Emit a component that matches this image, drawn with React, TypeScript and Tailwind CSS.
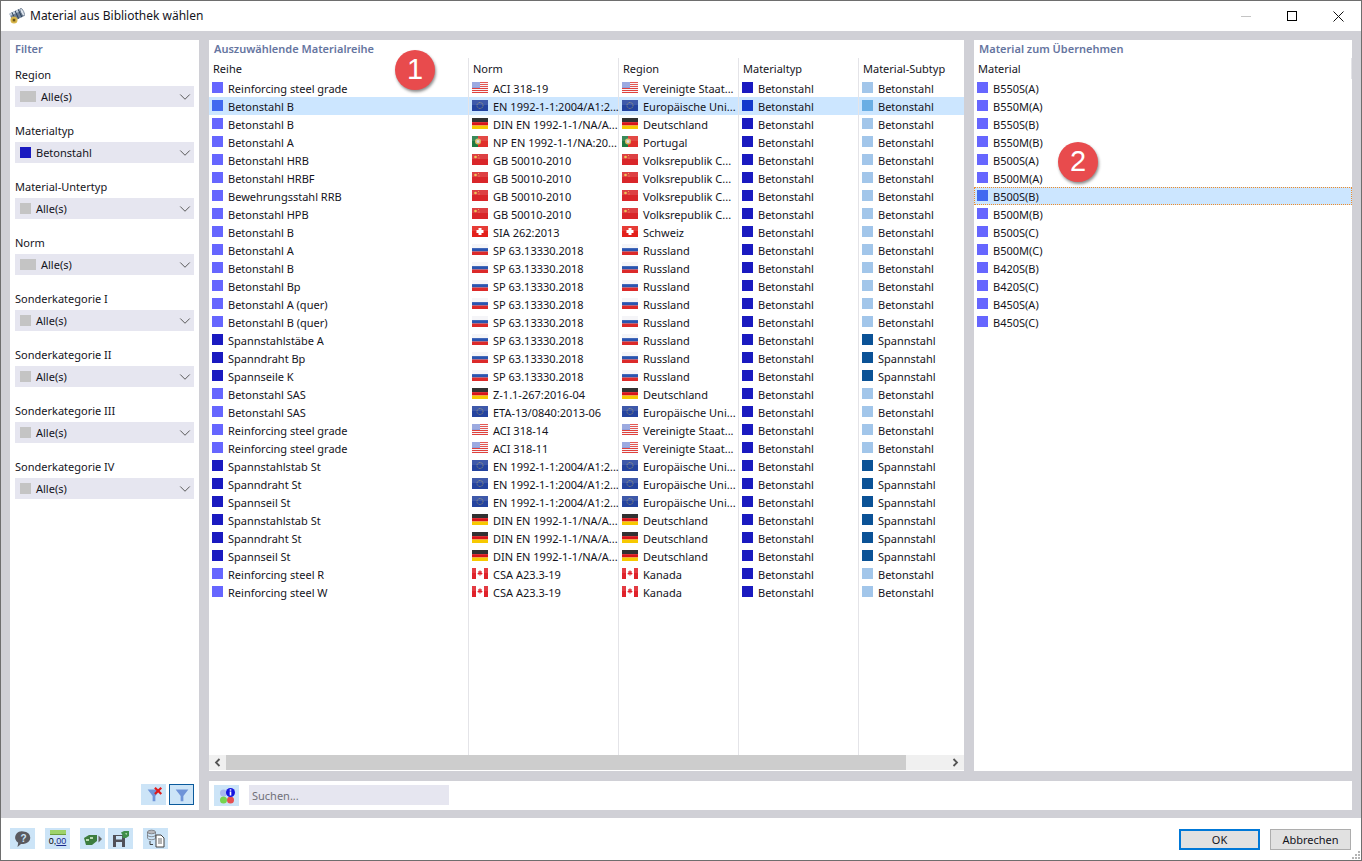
import { ChevronDown } from "lucide-react";

type FlagCode = "us" | "eu" | "de" | "pt" | "cn" | "ch" | "ru" | "ca";

interface Row {
  name: string;
  prestress?: boolean;
  norm: string;
  flag: FlagCode;
  region: string;
}

const US = "Vereinigte Staat...";
const EU = "Europäische Uni...";
const DE = "Deutschland";
const CN = "Volksrepublik C...";
const RU = "Russland";
const EC2 = "EN 1992-1-1:2004/A1:2...";
const DIN = "DIN EN 1992-1-1/NA/A...";
const SP = "SP 63.13330.2018";

const rows: Row[] = [
  { name: "Reinforcing steel grade", norm: "ACI 318-19", flag: "us", region: US },
  { name: "Betonstahl B", norm: EC2, flag: "eu", region: EU },
  { name: "Betonstahl B", norm: DIN, flag: "de", region: DE },
  { name: "Betonstahl A", norm: "NP EN 1992-1-1/NA:20...", flag: "pt", region: "Portugal" },
  { name: "Betonstahl HRB", norm: "GB 50010-2010", flag: "cn", region: CN },
  { name: "Betonstahl HRBF", norm: "GB 50010-2010", flag: "cn", region: CN },
  { name: "Bewehrungsstahl RRB", norm: "GB 50010-2010", flag: "cn", region: CN },
  { name: "Betonstahl HPB", norm: "GB 50010-2010", flag: "cn", region: CN },
  { name: "Betonstahl B", norm: "SIA 262:2013", flag: "ch", region: "Schweiz" },
  { name: "Betonstahl A", norm: SP, flag: "ru", region: RU },
  { name: "Betonstahl B", norm: SP, flag: "ru", region: RU },
  { name: "Betonstahl Bp", norm: SP, flag: "ru", region: RU },
  { name: "Betonstahl A (quer)", norm: SP, flag: "ru", region: RU },
  { name: "Betonstahl B (quer)", norm: SP, flag: "ru", region: RU },
  { name: "Spannstahlstäbe A", prestress: true, norm: SP, flag: "ru", region: RU },
  { name: "Spanndraht Bp", prestress: true, norm: SP, flag: "ru", region: RU },
  { name: "Spannseile K", prestress: true, norm: SP, flag: "ru", region: RU },
  { name: "Betonstahl SAS", norm: "Z-1.1-267:2016-04", flag: "de", region: DE },
  { name: "Betonstahl SAS", norm: "ETA-13/0840:2013-06", flag: "eu", region: EU },
  { name: "Reinforcing steel grade", norm: "ACI 318-14", flag: "us", region: US },
  { name: "Reinforcing steel grade", norm: "ACI 318-11", flag: "us", region: US },
  { name: "Spannstahlstab St", prestress: true, norm: EC2, flag: "eu", region: EU },
  { name: "Spanndraht St", prestress: true, norm: EC2, flag: "eu", region: EU },
  { name: "Spannseil St", prestress: true, norm: EC2, flag: "eu", region: EU },
  { name: "Spannstahlstab St", prestress: true, norm: DIN, flag: "de", region: DE },
  { name: "Spanndraht St", prestress: true, norm: DIN, flag: "de", region: DE },
  { name: "Spannseil St", prestress: true, norm: DIN, flag: "de", region: DE },
  { name: "Reinforcing steel R", norm: "CSA A23.3-19", flag: "ca", region: "Kanada" },
  { name: "Reinforcing steel W", norm: "CSA A23.3-19", flag: "ca", region: "Kanada" },
];

const materials = [
  "B550S(A)", "B550M(A)", "B550S(B)", "B550M(B)", "B500S(A)", "B500M(A)", "B500S(B)",
  "B500M(B)", "B500S(C)", "B500M(C)", "B420S(B)", "B420S(C)", "B450S(A)", "B450S(C)",
];

const filters = [
  { label: "Region", value: "Alle(s)", wide: true },
  { label: "Materialtyp", value: "Betonstahl", color: "bg-[#1a1ac0]" },
  { label: "Material-Untertyp", value: "Alle(s)" },
  { label: "Norm", value: "Alle(s)", wide: true },
  { label: "Sonderkategorie I", value: "Alle(s)" },
  { label: "Sonderkategorie II", value: "Alle(s)" },
  { label: "Sonderkategorie III", value: "Alle(s)" },
  { label: "Sonderkategorie IV", value: "Alle(s)" },
];

function Flag({ code }: { code: FlagCode }) {
  return (
    <svg width="16" height="11" viewBox="0 0 16 11" className="mt-[3px] shrink-0">
      {code === "us" && (
        <>
          <rect width="16" height="11" fill="#f4f4f8" />
          {[0, 2, 4, 6, 8, 10].map((y) => (
            <rect key={y} y={y} width="16" height="1" fill="#e0413c" />
          ))}
          <rect width="8" height="6" fill="#8f9fdc" />
        </>
      )}
      {code === "eu" && (
        <>
          <rect width="16" height="11" fill="#24439f" />
          <circle cx="8" cy="5.5" r="3" fill="none" stroke="#a79f68" strokeWidth="0.8" strokeDasharray="0.9 0.7" />
        </>
      )}
      {code === "de" && (
        <>
          <rect width="16" height="4" fill="#151515" />
          <rect y="4" width="16" height="3.5" fill="#d8141a" />
          <rect y="7.5" width="16" height="3.5" fill="#f7c900" />
        </>
      )}
      {code === "pt" && (
        <>
          <rect width="16" height="11" fill="#e0302c" />
          <rect width="6" height="11" fill="#1f7a42" />
          <circle cx="6" cy="5.5" r="3" fill="#d9b75e" />
          <circle cx="6" cy="5.5" r="1.5" fill="#d9d9e6" />
        </>
      )}
      {code === "cn" && (
        <>
          <rect width="16" height="11" fill="#d9262a" />
          <circle cx="3.5" cy="3" r="1.3" fill="#eec040" />
          <circle cx="6.5" cy="1.5" r="0.5" fill="#eec040" />
          <circle cx="7" cy="4" r="0.5" fill="#eec040" />
        </>
      )}
      {code === "ch" && (
        <>
          <rect width="16" height="11" fill="#e3211c" />
          <rect x="6.5" y="2" width="3" height="7" fill="#fff" />
          <rect x="4.5" y="4" width="7" height="3" fill="#fff" />
        </>
      )}
      {code === "ru" && (
        <>
          <rect width="16" height="4" fill="#f4f4f8" />
          <rect y="4" width="16" height="3.5" fill="#2a55b0" />
          <rect y="7.5" width="16" height="3.5" fill="#dc2a2a" />
        </>
      )}
      {code === "ca" && (
        <>
          <rect width="16" height="11" fill="#fff" />
          <rect width="4" height="11" fill="#e0222a" />
          <rect x="12" width="4" height="11" fill="#e0222a" />
          <path d="M8 2l1 1.5 1-.4-.4 2 1-.2-.6 1.600H8.300V8h-.6V6.500H5.900L5.400 4.900l1 .2-.4-2 1 .4z" fill="#e0222a" />
        </>
      )}
      {/* the flags carry a soft highlight over their upper half */}
      <rect width="16" height="5" fill="#fff" opacity="0.12" />
    </svg>
  );
}

function Swatch({ color, className = "mt-[3px]" }: { color: string; className?: string }) {
  return <span className={`h-[11px] w-[11px] shrink-0 ${className} ${color}`} />;
}

function Column({
  title,
  width,
  last,
  children,
}: {
  title: string;
  width: string;
  last?: boolean;
  children: React.ReactNode;
}) {
  return (
    <div className={`flex h-full shrink-0 flex-col ${width} ${last ? "" : "border-r border-[#e4e4e8]"}`}>
      <div className="h-[21px] pl-[4px] pt-[3px] leading-[16px]">{title}</div>
      {children}
    </div>
  );
}

function Cell({ selected, children }: { selected: boolean; children: React.ReactNode }) {
  return (
    <div className={`flex h-[18px] gap-[5px] whitespace-nowrap pl-[3px] leading-[20px] ${selected ? "bg-[#cce6ff]" : ""}`}>
      {children}
    </div>
  );
}

function ToolButton({ className = "", children }: { className?: string; children: React.ReactNode }) {
  return (
    <button type="button" className={`flex h-[21px] w-[25px] items-center justify-center bg-[#cce4f7] ${className}`}>
      {children}
    </button>
  );
}

function Funnel() {
  return <path d="M5 5h14l-5.500 7V18h-3v-6z" fill="#6f94d8" />;
}

function Badge({ value, className }: { value: number; className: string }) {
  return (
    <div
      className={`absolute flex h-[40px] w-[40px] items-center justify-center rounded-full bg-[#e84b4d] font-['Liberation_Sans',sans-serif] text-[29px] text-white shadow-[1px_2px_3px_rgba(0,0,0,0.45)] ${className}`}
    >
      {value}
    </div>
  );
}

export default function App() {
  return (
    <div className="flex h-[861px] w-[1362px] flex-col overflow-hidden border border-[#6e6e6e] bg-white font-['Noto_Sans',sans-serif] text-[11px] text-[#14141c]">
      {/* title bar */}
      <div className="flex h-[30px] shrink-0 items-center">
        <svg width="16" height="16" viewBox="0 0 16 16" className="ml-[8px]">
          <g transform="rotate(-25 8 7)">
            <rect x="1.500" y="2.500" width="12" height="8.500" rx="1" fill="#6d7f97" />
            <rect x="1.500" y="2.500" width="12" height="2.500" fill="#c3cfdc" />
            <path d="M4 2.500h1V11H4zM7.500 2.500h1V11h-1zM11 2.500h1V11h-1z" fill="#2f425a" />
            <ellipse cx="14" cy="6.700" rx="1.500" ry="4.200" fill="#dfe6ee" stroke="#4c5d73" strokeWidth="0.600" />
          </g>
          <circle cx="5" cy="12" r="3.500" fill="#d8b64a" />
          <rect x="3.700" y="10.800" width="2.600" height="2.600" fill="#6a5518" />
        </svg>
        <span className="ml-[5px] text-[12px]">Material aus Bibliothek wählen</span>
        <div className="ml-auto flex">
          <div className="flex h-[30px] w-[46px] items-center justify-center">
            <span className="h-px w-[10px] bg-[#c4c4c4]" />
          </div>
          <div className="flex h-[30px] w-[46px] items-center justify-center">
            <span className="h-[10px] w-[10px] border border-black" />
          </div>
          <div className="flex h-[30px] w-[46px] items-center justify-center">
            <svg width="11" height="11" viewBox="0 0 11 11" fill="none" stroke="#111" strokeWidth="1">
              <path d="M.5.5l10 10M10.500.5l-10 10" />
            </svg>
          </div>
        </div>
      </div>

      {/* body */}
      <div className="flex h-[787px] shrink-0 gap-[10px] bg-[#d0d0d6] pb-[8px] pl-[9px] pr-[9px] pt-[9px]">
        {/* filter */}
        <div className="flex w-[189px] shrink-0 flex-col bg-white px-[5px] pb-[5px]">
          <div className="h-[18px] pt-[1px] font-semibold leading-[16px] text-[#66759f]">Filter</div>
          <div className="mt-[8px] flex flex-col gap-[15px]">
            {filters.map((f) => (
              <div key={f.label}>
                <div className="h-[20px] leading-[18px]">{f.label}</div>
                <div className="flex h-[21px] items-center bg-[#e6e6f0] pl-[5px]">
                  <span className={`h-[11px] shrink-0 ${f.wide ? "w-[16px]" : "w-[11px]"} ${f.color ?? "bg-[#c4c4c4]"}`} />
                  <span className="ml-[5px] pt-[2px]">{f.value}</span>
                  <ChevronDown size={18} strokeWidth={1.3} className="ml-auto text-[#555]" />
                </div>
              </div>
            ))}
          </div>
          <div className="mt-auto flex justify-end gap-[3px]">
            <ToolButton>
              <svg width="22" height="20" viewBox="0 0 24 22">
                <Funnel />
                <path d="M13 3l7 7M20 3l-7 7" stroke="#e01a1a" strokeWidth="2.400" />
              </svg>
            </ToolButton>
            <ToolButton className="border border-[#0a5a9c]">
              <svg width="22" height="20" viewBox="0 0 24 22">
                <Funnel />
              </svg>
            </ToolButton>
          </div>
        </div>

        <div className="flex w-[1143px] shrink-0 flex-col gap-[10px]">
          <div className="flex h-[731px] shrink-0 gap-[10px]">
            {/* series table */}
            <div className="relative flex w-[755px] shrink-0 flex-col bg-white">
              <div className="h-[18px] shrink-0 pl-[5px] pt-[1px] font-semibold leading-[16px] text-[#66759f]">
                Auszuwählende Materialreihe
              </div>
              <div className="flex h-[697px] shrink-0">
                <Column title="Reihe" width="w-[260px]">
                  {rows.map((r, i) => (
                    <Cell key={i} selected={i === 1}>
                      <Swatch color={i === 1 ? "bg-[#4169f0]" : r.prestress ? "bg-[#1a1ac0]" : "bg-[#6666ff]"} />
                      {r.name}
                    </Cell>
                  ))}
                </Column>
                <Column title="Norm" width="w-[150px]">
                  {rows.map((r, i) => (
                    <Cell key={i} selected={i === 1}>
                      <Flag code={r.flag} />
                      {r.norm}
                    </Cell>
                  ))}
                </Column>
                <Column title="Region" width="w-[120px]">
                  {rows.map((r, i) => (
                    <Cell key={i} selected={i === 1}>
                      <Flag code={r.flag} />
                      {r.region}
                    </Cell>
                  ))}
                </Column>
                <Column title="Materialtyp" width="w-[120px]">
                  {rows.map((_, i) => (
                    <Cell key={i} selected={i === 1}>
                      <Swatch color={i === 1 ? "bg-[#1238cc]" : "bg-[#1a1ac0]"} />
                      Betonstahl
                    </Cell>
                  ))}
                </Column>
                <Column title="Material-Subtyp" width="w-[105px]" last>
                  {rows.map((r, i) => (
                    <Cell key={i} selected={i === 1}>
                      <Swatch color={i === 1 ? "bg-[#6aaee4]" : r.prestress ? "bg-[#0b5296]" : "bg-[#a2c6ea]"} />
                      {r.prestress ? "Spannstahl" : "Betonstahl"}
                    </Cell>
                  ))}
                </Column>
              </div>
              <div className="flex h-[15px] shrink-0 bg-[#f0f0f0]">
                <div className="flex w-[17px] items-center justify-center">
                  <svg width="7" height="9" viewBox="0 0 7 9" fill="none" stroke="#555" strokeWidth="1.800">
                    <path d="M5.500 1L2 4.500 5.500 8" />
                  </svg>
                </div>
                <div className="w-[680px] bg-[#cdcdcd]" />
                <div className="ml-auto flex w-[17px] items-center justify-center">
                  <svg width="7" height="9" viewBox="0 0 7 9" fill="none" stroke="#555" strokeWidth="1.800">
                    <path d="M1.500 1L5 4.500 1.500 8" />
                  </svg>
                </div>
              </div>
              <Badge value={1} className="left-[186px] top-[10px]" />
            </div>

            {/* material list */}
            <div className="relative flex w-[378px] shrink-0 flex-col bg-white">
              <div className="h-[18px] shrink-0 pl-[5px] pt-[1px] font-semibold leading-[16px] text-[#66759f]">
                Material zum Übernehmen
              </div>
              <div className="h-[21px] border-r border-[#e4e4e8] pl-[4px] pt-[3px] leading-[16px]">Material</div>
              {materials.map((m, i) =>
                i === 6 ? (
                  <div
                    key={i}
                    className="flex h-[18px] gap-[5px] border border-dotted border-[#f08c28] bg-[#cce6ff] pl-[2px] leading-[18px]"
                  >
                    <Swatch color="bg-[#4169f0]" className="mt-[2px]" />
                    {m}
                  </div>
                ) : (
                  <div key={i} className="flex h-[18px] gap-[5px] pl-[3px] leading-[20px]">
                    <Swatch color="bg-[#6666ff]" />
                    {m}
                  </div>
                )
              )}
              <Badge value={2} className="left-[84px] top-[102px]" />
            </div>
          </div>

          {/* search */}
          <div className="flex h-[29px] shrink-0 items-start bg-white pl-[5px] pt-[4px]">
            <ToolButton>
              <svg width="18" height="18" viewBox="0 0 18 18">
                <circle cx="5.500" cy="6" r="3.500" fill="#a9b8ee" />
                <circle cx="5.500" cy="13" r="3.500" fill="#77d44e" />
                <circle cx="12.500" cy="13" r="3.500" fill="#e65050" />
                <circle cx="12.500" cy="5.500" r="4.500" fill="#1414e0" />
                <rect x="11.700" y="4.500" width="1.600" height="4" fill="#fff" />
                <rect x="11.700" y="2.300" width="1.600" height="1.400" fill="#fff" />
              </svg>
            </ToolButton>
            <div className="ml-[10px] h-[20px] w-[200px] bg-[#e6e6f0] pl-[3px] leading-[22px] text-[#6f6f78]">Suchen...</div>
          </div>
        </div>
      </div>

      {/* footer */}
      <div className="relative flex h-[42px] shrink-0 items-start pl-[9px] pr-[10px]">
        <div className="mt-[10px] flex">
          <ToolButton>
            <svg width="18" height="18" viewBox="0 0 18 18">
              <path d="M9.500 1.500a6.800 6.200 0 0 1 0 12.400H7L3.500 17l.7-4.300A6.500 6.200 0 0 1 9.500 1.500z" fill="#5a5a60" />
              <text x="9.500" y="11.500" textAnchor="middle" fontSize="10" fontWeight="700" fill="#cce4f7" fontFamily="Liberation Sans, sans-serif">?</text>
            </svg>
          </ToolButton>
          <ToolButton className="ml-[10px] flex-col">
            <span className="h-[5px] w-[16px] border-b border-[#6b9e3e] bg-[#9ed36a]" />
            <span className="font-['Liberation_Sans',sans-serif] text-[9px] leading-[12px] text-black">
              0,<span className="text-[#1a2a8c] underline">00</span>
            </span>
          </ToolButton>
          <ToolButton className="ml-[10px]">
            <svg width="20" height="14" viewBox="0 0 20 14">
              <path d="M1 6l5-3h8v6l-5 4H3z" fill="#3d7d3f" />
              <path d="M3 7h3v2H3zM7 5h3v2H7z" fill="#b7dcb0" />
              <path d="M15.500 3.500L19 7l-3.500 3.500z" fill="#666" />
            </svg>
          </ToolButton>
          <ToolButton className="ml-[3px]">
            <svg width="20" height="18" viewBox="0 0 20 18">
              <path d="M2 5h10l2 2v10H2z" fill="#505058" />
              <rect x="5" y="6" width="6" height="3.500" fill="#cce4f7" />
              <rect x="5" y="12" width="6" height="5" fill="#cce4f7" />
              <path d="M10 2.500l3-1.500h5v5l-3 2h-3.500V5z" fill="#3f8f4a" />
              <path d="M14 3.500l2-.5-.5 2z" fill="#c8e8c4" />
            </svg>
          </ToolButton>
          <ToolButton className="ml-[10px]">
            <svg width="20" height="19" viewBox="0 0 20 19" fill="none">
              <ellipse cx="5.500" cy="3" rx="4" ry="1.800" fill="#b8b8bc" stroke="#6a6a6e" strokeWidth="0.700" />
              <path d="M1.500 3v6c0 2.200 8 2.200 8 0V3M1.500 6c0 2.200 8 2.200 8 0" stroke="#6a6a6e" strokeWidth="0.700" />
              <path d="M4 12v3.500h3" stroke="#444" />
              <path d="M10 6h5l3 3v9h-8z" fill="#fff" stroke="#444" />
              <path d="M12 10h4M12 12h4M12 14h4" stroke="#444" strokeWidth="0.800" />
            </svg>
          </ToolButton>
        </div>
        <div className="ml-auto mt-[11px] flex gap-[10px]">
          <button type="button" className="h-[21px] w-[81px] border-2 border-[#0078d7] bg-[#e1e1e1] pt-[1px] text-[11px]">
            OK
          </button>
          <button type="button" className="h-[21px] w-[81px] border border-[#adadad] bg-[#e1e1e1] pt-[1px] text-[11px]">
            Abbrechen
          </button>
        </div>
        <svg width="10" height="10" viewBox="0 0 10 10" className="absolute bottom-0 right-0" fill="#b4b4b4">
          <rect x="7" y="1" width="2" height="2" />
          <rect x="4" y="4" width="2" height="2" />
          <rect x="7" y="4" width="2" height="2" />
          <rect x="1" y="7" width="2" height="2" />
          <rect x="4" y="7" width="2" height="2" />
          <rect x="7" y="7" width="2" height="2" />
        </svg>
      </div>
    </div>
  );
}
